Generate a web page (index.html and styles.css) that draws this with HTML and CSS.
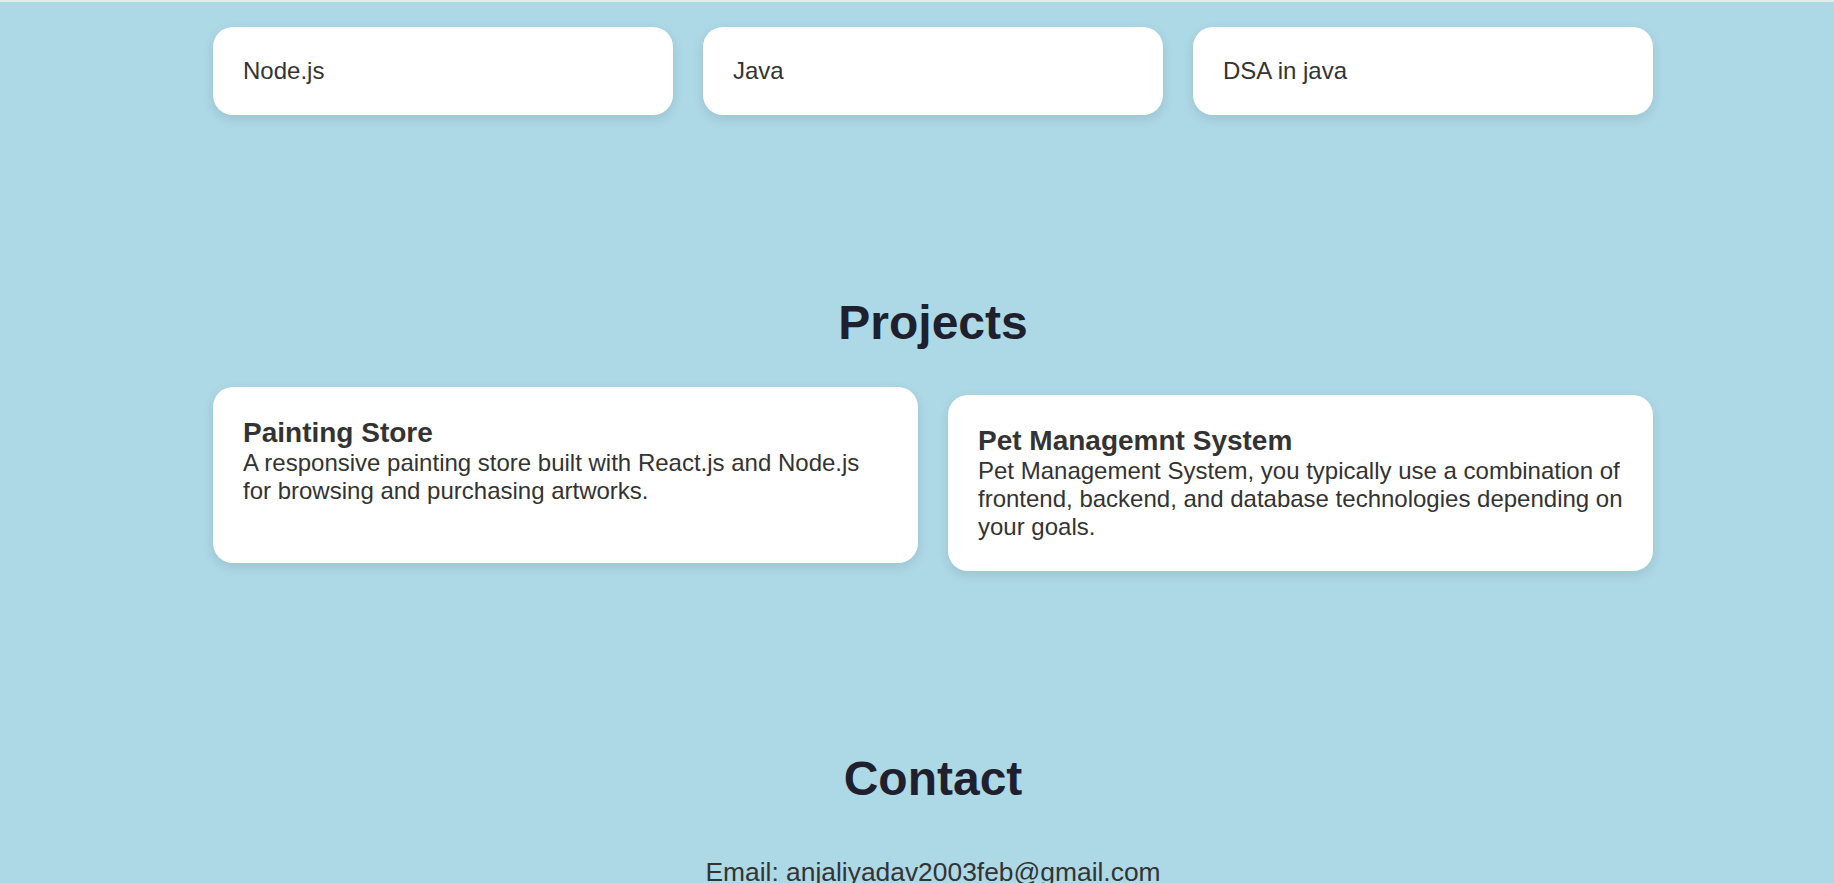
FILE: index.html
```html
<!DOCTYPE html>
<html lang="en">
<head>
<meta charset="utf-8">
<title>Portfolio</title>
<link rel="stylesheet" href="styles.css">
</head>
<body>
<div class="top-edge"></div>
<main class="page">
  <section class="section section-skills">
    <div class="container skills-grid">
      <div class="card skill-card">Node.js</div>
      <div class="card skill-card">Java</div>
      <div class="card skill-card">DSA in java</div>
    </div>
  </section>

  <section class="section section-projects">
    <div class="container">
      <h2 class="section-title">Projects</h2>
      <div class="projects-grid">
        <div class="card project-card is-hovered">
          <h3 class="project-title">Painting Store</h3>
          <p class="project-desc">A responsive painting store built with React.js and Node.js for browsing and purchasing artworks.</p>
        </div>
        <div class="card project-card">
          <h3 class="project-title">Pet Managemnt System</h3>
          <p class="project-desc">Pet Management System, you typically use a combination of frontend, backend, and database technologies depending on your goals.</p>
        </div>
      </div>
    </div>
  </section>

  <section class="section section-contact">
    <div class="container">
      <h2 class="section-title">Contact</h2>
      <p class="contact-line">Email: anjaliyadav2003feb@gmail.com</p>
    </div>
  </section>
</main>
</body>
</html>
```

FILE: styles.css
```css
html, body {
  margin: 0;
  padding: 0;
}

body {
  background: #add8e6;
  font-family: "Liberation Sans", Arial, sans-serif;
  font-size: 24px;
  color: #333333;
  overflow: hidden;
}

.top-edge {
  height: 2px;
  background: #e6e8e9;
}

.page {
  padding-left: 32px;
}

.container {
  max-width: 1440px;
  margin: 0 auto;
}

.section-skills {
  padding-top: 25px;
}

.skills-grid {
  display: grid;
  grid-template-columns: repeat(3, 1fr);
  gap: 30px;
}

.card {
  background: #ffffff;
  border-radius: 20px;
  box-shadow: 0 4px 12px rgba(0, 0, 0, 0.1);
  padding: 30px;
}

.skill-card {
  line-height: normal;
}

.section-projects {
  padding-top: 180px;
}

.section-title {
  font-size: 48px;
  font-weight: 700;
  color: #1f1f2e;
  text-align: center;
  margin: 0 0 45px;
  line-height: normal;
}

.projects-grid {
  display: grid;
  grid-template-columns: repeat(2, 1fr);
  gap: 30px;
}

.project-card.is-hovered {
  transform: translateY(-8px);
}

.project-title {
  font-size: 28px;
  font-weight: 700;
  margin: 0;
  color: #333333;
}

.project-desc {
  margin: 0;
}

.section-contact {
  padding-top: 180px;
}

.section-contact .section-title {
  margin-bottom: 51px;
}

.contact-line {
  margin: 0;
  font-size: 26.4px;
  text-align: center;
  color: #333333;
}
```
